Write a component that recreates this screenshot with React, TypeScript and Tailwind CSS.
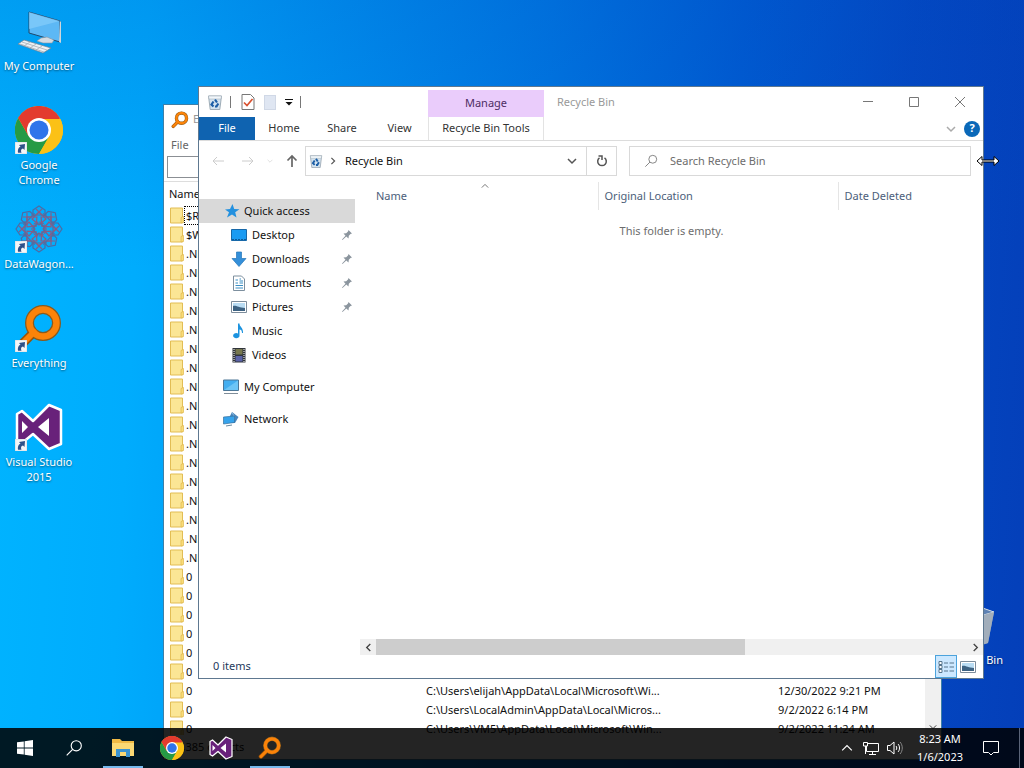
import { ReactNode } from "react";
import clsx from "clsx";

interface NavItem {
  name: string;
  icon: ReactNode;
  pinned?: boolean;
}

interface FileRow {
  name: string;
  path?: string;
  date?: string;
}

const ChromeIcon = ({ className }: { className?: string }) => (
  <svg viewBox="0 0 48 48" className={className}>
    <circle cx="24" cy="24" r="24" fill="#fbc116" />
    <path d="M24 24 3.2 12A24 24 0 0 1 44.8 12Z" fill="#e33b2e" />
    <path d="M3.2 12A24 24 0 0 0 24 48L34.4 30 24 24 13.6 30Z" fill="#269a45" />
    <path d="M3.2 12 13.6 30 24 13H44.8A24 24 0 0 0 3.2 12Z" fill="#e33b2e" />
    <path d="M24 13H45.3A24 24 0 0 1 24 48L34.4 30Z" fill="#fbc116" />
    <circle cx="24" cy="24" r="12" fill="#fff" />
    <circle cx="24" cy="24" r="9.5" fill="#2f74ea" />
  </svg>
);

const VisualStudioIcon = ({ className }: { className?: string }) => (
  <svg viewBox="0 0 48 48" className={className}>
    <path
      d="M2 11 7 8 18 18 34 2 46 7V41L34 46 18 31 7 40 2 37Z"
      fill="#68217a"
      stroke="#fff"
      strokeWidth="2.500"
      strokeLinejoin="round"
    />
    <path d="M34 15V33L23 24ZM7 18 13 24 7 30Z" fill="#fff" />
  </svg>
);

const EverythingIcon = ({ className }: { className?: string }) => (
  <svg viewBox="0 0 48 48" className={className}>
    <path d="M18 29 6 41" stroke="#9a5208" strokeWidth="9" strokeLinecap="round" />
    <circle cx="28" cy="19" r="13.500" fill="none" stroke="#8a5a1c" strokeWidth="9" />
    <path d="M19 28 6 41" stroke="#fb8309" strokeWidth="6" strokeLinecap="round" />
    <circle cx="28" cy="19" r="13.500" fill="none" stroke="#fb8309" strokeWidth="6.500" />
  </svg>
);

const ComputerIcon = ({ className }: { className?: string }) => (
  <svg viewBox="0 0 48 48" className={className}>
    <path d="M14 5 45 14V35L14 26Z" fill="#5db8f5" stroke="#20486c" />
    <path d="M14 5 45 14 14 22Z" fill="#86cdfb" opacity=".7" />
    <path d="M45 14 46 15V36L44 35" fill="#cfd6dc" />
    <path d="M26 31 32 30 39 33 37 36 28 36 22 34Z" fill="#d4dce4" stroke="#8696a5" strokeWidth=".6" />
    <path d="M9 33 36 41 28 46 3 37Z" fill="#eef1f4" stroke="#70808f" strokeWidth=".7" />
    <path d="M7 35 32 43M5 37 29 45M15 35 9 39M21 37 15 41M27 39 21 43" stroke="#a5afb8" strokeWidth=".8" />
  </svg>
);

const DataWagonIcon = ({ className }: { className?: string }) => (
  <svg viewBox="0 0 48 48" className={className} fill="none" strokeWidth="1.200">
    {[0, 45, 90, 135, 180, 225, 270, 315].map((angle) => (
      <g key={angle} transform={`rotate(${angle} 24 24)`}>
        <path d="M18 12V5L24 1 30 5V12" stroke="#4d6ba4" />
        <path d="M17 14 24 7 31 14 24 20Z" stroke="#8a5c84" />
        <path d="M16 10H32M20 19H28" stroke="#5a6c9c" />
        <path d="M21 4 27 10M27 4 21 10" stroke="#8a5c84" />
      </g>
    ))}
    <circle cx="24" cy="24" r="7" stroke="#8a5c84" strokeDasharray="2 1" />
  </svg>
);

const BinIcon = ({ className }: { className?: string }) => (
  <svg viewBox="0 0 16 16" className={className}>
    <path d="M1.500 2H14.500L12.800 15.500H3.200Z" fill="#d3e3ef" stroke="#8c9aa6" strokeWidth=".8" />
    <path d="M1.500 2H14.500L14 5H2Z" fill="#f1f6fa" stroke="#9ba7b1" strokeWidth=".5" />
    <path d="M8 5.500 10 8.500M11.300 9.500 9.500 12.500H8M6.500 12.500 4.500 10.500 6.500 7.500" fill="none" stroke="#1c5ea6" strokeWidth="2.200" />
  </svg>
);

const FullBinIcon = ({ className }: { className?: string }) => (
  <svg viewBox="0 0 48 48" className={className}>
    <path d="M5 10 24 4 44 11 38 42 26 46 10 42Z" fill="#8e9fb2" />
    <path d="M5 10 24 4 44 11 30 15Z" fill="#5e82b4" stroke="#d5dfe9" strokeWidth="1" />
    <path d="M30 15 44 11 38 42 28 45Z" fill="#a2aebb" />
  </svg>
);

const FolderIcon = () => (
  <svg viewBox="0 0 14 17" className="block h-[17px] w-[14px]">
    <path d="M.5 1H12.500V16H.5Z" fill="#fbe695" stroke="#e2bd55" />
    <path d="M11 10.500 13.500 9.500V15.500L11 16Z" fill="#f9dc77" stroke="#dfb750" strokeWidth=".7" />
  </svg>
);

const ShortcutArrow = () => (
  <svg viewBox="0 0 12 12" className="absolute bottom-0 left-0 size-3">
    <path d="M0 0H12V12H0Z" fill="#f4f6f8" stroke="#c3c9cf" strokeWidth=".6" />
    <path d="M3 10.800C2.500 7 4 5.300 5.500 4.800L4 3 10 2 9.500 8 8 6.500C6 7 5.500 8.500 6.500 10.800Z" fill="#2e5189" />
  </svg>
);

const PinIcon = () => (
  <svg viewBox="0 0 12 12" className="size-3">
    <path d="M7.500 1 11 4.500 9.500 5 7.800 6.800 7.500 9.500 5.300 7.500 1.500 11 1 10.500 4.500 6.700 2.500 4.500 5.200 4.200 7 2.500Z" fill="#8b959e" />
  </svg>
);

const PictureIcon = () => (
  <svg viewBox="0 0 16 16" className="size-4">
    <path d="M.5 2.500H15.500V13.500H.5Z" fill="#fff" stroke="#7c8c9b" />
    <path d="M2 4H14V12H2Z" fill="#b9dcf3" />
    <path d="M2 7C5 6 8 9 14 9V12H2Z" fill="#3d6282" />
  </svg>
);

const SearchIcon = ({ className }: { className?: string }) => (
  <svg viewBox="0 0 16 16" className={className} fill="none" stroke="currentColor">
    <circle cx="10" cy="6" r="4.500" />
    <path d="M6.800 9.200 1.500 14.500" />
  </svg>
);

const Chevron = ({ className }: { className?: string }) => (
  <svg viewBox="0 0 10 10" className={className} fill="none" stroke="currentColor">
    <path d="M1 3 5 7 9 3" />
  </svg>
);

const quickAccess: NavItem[] = [
  {
    name: "Desktop",
    pinned: true,
    icon: (
      <svg viewBox="0 0 16 16" className="size-4">
        <path d="M.5 2.500H15.500V13.500H.5Z" fill="#1a9bf2" stroke="#1768a8" />
        <path d="M1 12.500H15" stroke="#0d5b99" strokeDasharray="2 1" />
      </svg>
    ),
  },
  {
    name: "Downloads",
    pinned: true,
    icon: (
      <svg viewBox="0 0 16 16" className="size-4">
        <path d="M5.500 1H10.500V7.500H15L8 15.500 1 7.500H5.500Z" fill="#348fd9" stroke="#2476b9" strokeWidth=".7" />
      </svg>
    ),
  },
  {
    name: "Documents",
    pinned: true,
    icon: (
      <svg viewBox="0 0 16 16" className="size-4">
        <path d="M2.500 1H10.500L13.500 4V15.500H2.500Z" fill="#fff" stroke="#7d8f9e" />
        <path d="M4.500 5H7M8.500 4H10M8.500 6H12M4.500 8H7M8.500 8H12M4.500 10.500H12M4.500 13H12" stroke="#3a8fc4" />
      </svg>
    ),
  },
  { name: "Pictures", pinned: true, icon: <PictureIcon /> },
  {
    name: "Music",
    icon: (
      <svg viewBox="0 0 16 16" className="size-4">
        <path d="M7 .5H8.500C8.500 4 12.500 4.500 12 10H11C11 7.500 10 6.500 8.500 6.500V12.500A3.200 2.600 0 1 1 7 10.500Z" fill="#1c93df" />
      </svg>
    ),
  },
  {
    name: "Videos",
    icon: (
      <svg viewBox="0 0 16 16" className="size-4">
        <path d="M1.500 1H14.500V15.500H1.500Z" fill="#30343a" />
        <path d="M4.500 2H11.500V7.500H4.500Z" fill="#77784e" />
        <path d="M4.500 9H11.500V14.500H4.500Z" fill="#5b63a8" />
        <path d="M3 2V15M13 2V15" stroke="#fff" strokeDasharray="1 1" />
      </svg>
    ),
  },
];

const desktopIcons: { name: string; icon: ReactNode; shortcut: boolean }[] = [
  { name: "My Computer", icon: <ComputerIcon className="size-12" />, shortcut: false },
  { name: "Google Chrome", icon: <ChromeIcon className="size-12" />, shortcut: true },
  { name: "DataWagon...", icon: <DataWagonIcon className="size-12" />, shortcut: true },
  { name: "Everything", icon: <EverythingIcon className="size-12" />, shortcut: true },
  { name: "Visual Studio 2015", icon: <VisualStudioIcon className="size-12" />, shortcut: true },
];

const files: FileRow[] = [
  { name: "$Recycle.Bin" },
  { name: "$WinREAgent" },
  ...Array.from({ length: 17 }, () => ({ name: ".NET" })),
  ...Array.from({ length: 6 }, () => ({ name: "0" })),
  { name: "0", path: "C:\\Users\\elijah\\AppData\\Local\\Microsoft\\Wi...", date: "12/30/2022 9:21 PM" },
  { name: "0", path: "C:\\Users\\LocalAdmin\\AppData\\Local\\Micros...", date: "9/2/2022 6:14 PM" },
  { name: "0", path: "C:\\Users\\VM5\\AppData\\Local\\Microsoft\\Win...", date: "9/2/2022 11:24 AM" },
];

function DesktopIcon({ name, icon, shortcut }: { name: string; icon: ReactNode; shortcut: boolean }) {
  return (
    <button className="flex h-[99px] w-[78px] flex-col items-center gap-[3px] text-white">
      <span className="relative">
        {icon}
        {shortcut && <ShortcutArrow />}
      </span>
      <span className="leading-[15px] [text-shadow:0_1px_2px_rgba(0,0,0,0.5)]">{name}</span>
    </button>
  );
}

function EverythingWindow() {
  return (
    <section className="absolute top-[104px] right-[82px] bottom-2 left-[163px] flex flex-col overflow-hidden border border-[#3c7fa8] bg-white">
      <div className="flex h-[29px] shrink-0 items-center gap-1 pl-[7px] text-[#999]">
        <EverythingIcon className="size-[18px]" />
        <h2>Everything</h2>
      </div>
      <div className="flex h-[22px] shrink-0 items-center pl-[7px] text-[#666]">
        <button>File</button>
      </div>
      <input aria-label="Search files" className="mx-[3px] h-[22px] shrink-0 border border-[#8b8f94]" />
      <div className="mt-[3px] flex min-h-0 flex-1 border-t border-[#ddd]">
        <div className="min-w-0 flex-1 overflow-hidden">
          <table className="w-full table-fixed text-left">
            <thead>
              <tr className="h-6">
                <th className="w-[262px] pl-[5px] font-normal">Name</th>
                <th className="w-[352px] font-normal">Path</th>
                <th className="font-normal">Date Modified</th>
              </tr>
            </thead>
            <tbody>
              {files.map((file, i) => (
                <tr key={i} className="h-[19px]">
                  <td className="p-0 pl-[6px]">
                    <div className="flex items-center">
                      <FolderIcon />
                      <span
                        className={clsx(
                          "h-[19px] flex-1 border pl-px leading-[17px]",
                          i === 0 ? "border-dotted border-black" : "border-transparent"
                        )}
                      >
                        {file.name}
                      </span>
                    </div>
                  </td>
                  <td className="p-0 leading-[19px]">{file.path}</td>
                  <td className="p-0 leading-[19px]">{file.date}</td>
                </tr>
              ))}
            </tbody>
          </table>
        </div>
        <div className="flex w-4 shrink-0 flex-col justify-end bg-[#f0f0f0]">
          <button aria-label="Scroll down" className="flex h-4 items-center justify-center">
            <Chevron className="size-2" />
          </button>
        </div>
      </div>
      <div className="flex h-6 shrink-0 items-center pl-[6px]">51,385 objects</div>
    </section>
  );
}

function TitleBar() {
  return (
    <div className="flex h-[30px] shrink-0">
      <div className="flex w-[229px] items-center pl-2">
        <BinIcon className="size-4" />
        <span className="ml-[7px] h-3 w-px bg-[#777]" />
        <button aria-label="Properties" className="ml-[9px]">
          <svg viewBox="0 0 16 16" className="size-4">
            <path d="M2 .5H10.500L14 4V15.500H2Z" fill="#fff" stroke="#777" />
            <path d="M4 8.500 7 11.500 12.500 5" fill="none" stroke="#d8512f" strokeWidth="1.700" />
          </svg>
        </button>
        <button aria-label="New folder" className="ml-2 h-[15px] w-3 border border-[#d0d8e6] bg-[#dfe6f2]" />
        <button aria-label="Customize Quick Access Toolbar" className="ml-2">
          <svg viewBox="0 0 10 10" className="size-[10px]">
            <path d="M1 2.500H9" stroke="#111" />
            <path d="M1.500 5H8.500L5 8.500Z" fill="#111" />
          </svg>
        </button>
        <span className="ml-[6px] h-3 w-px bg-[#777]" />
      </div>
      <div className="mt-[3px] flex w-[116px] items-center justify-center bg-[#eaccfb] text-[#4d2c63]">Manage</div>
      <h1 className="ml-[13px] flex-1 leading-[30px] text-[#999]">Recycle Bin</h1>
      <div className="flex text-[#777]">
        <button aria-label="Minimize" className="flex w-[46px] items-center justify-center">
          <svg viewBox="0 0 10 10" className="size-[10px]" stroke="currentColor">
            <path d="M0 4.500H10" />
          </svg>
        </button>
        <button aria-label="Maximize" className="flex w-[46px] items-center justify-center">
          <svg viewBox="0 0 10 10" className="size-[10px]" fill="none" stroke="currentColor">
            <path d="M.5 .5H9.500V9.500H.5Z" />
          </svg>
        </button>
        <button aria-label="Close" className="flex w-[46px] items-center justify-center">
          <svg viewBox="0 0 10 10" className="size-[10px]" stroke="currentColor">
            <path d="M0 0 10 10M10 0 0 10" />
          </svg>
        </button>
      </div>
    </div>
  );
}

function RibbonTabs() {
  return (
    <div className="flex h-6 shrink-0 border-b border-[#dcdcdc] text-[#333]">
      <button className="w-14 bg-[#0f63b0] text-white">File</button>
      <button className="w-[58px]">Home</button>
      <button className="w-[58px]">Share</button>
      <button className="w-[57px]">View</button>
      <button className="w-[116px] border-x border-[#e3e3e3]">Recycle Bin Tools</button>
      <div className="flex flex-1 items-center justify-end gap-2 pr-[3px] text-[#aaa]">
        <button aria-label="Expand ribbon">
          <Chevron className="size-[10px] stroke-[1.500px]" />
        </button>
        <button
          aria-label="Help"
          className="flex size-4 items-center justify-center rounded-full bg-[#0a68b8] font-bold text-white"
        >
          ?
        </button>
      </div>
    </div>
  );
}

function AddressBar() {
  return (
    <div className="flex h-[41px] shrink-0 items-start pt-[5px] pr-3">
      <div className="flex h-[30px] w-[106px] items-center pl-3 text-[#ccc]">
        <button aria-label="Back">
          <svg viewBox="0 0 14 14" className="size-[14px]" fill="none" stroke="currentColor">
            <path d="M13 7H2M6 3 2 7 6 11" />
          </svg>
        </button>
        <button aria-label="Forward" className="ml-4">
          <svg viewBox="0 0 14 14" className="size-[14px]" fill="none" stroke="currentColor">
            <path d="M1 7H12M8 3 12 7 8 11" />
          </svg>
        </button>
        <button aria-label="Recent locations" className="ml-3">
          <Chevron className="size-[6px]" />
        </button>
        <button aria-label="Up" className="ml-3 text-[#666]">
          <svg viewBox="0 0 14 14" className="size-[14px]" fill="none" stroke="currentColor" strokeWidth="1.700">
            <path d="M7 13V2M2.500 6.500 7 2 11.500 6.500" />
          </svg>
        </button>
      </div>
      <div className="flex h-[30px] flex-[310] items-center border border-[#d9d9d9]">
        <BinIcon className="ml-[3px] size-[14px]" />
        <Chevron className="ml-[6px] size-2 -rotate-90 stroke-[1.500px] text-[#555]" />
        <span className="ml-2 flex-1">Recycle Bin</span>
        <button aria-label="Previous locations" className="mr-[9px] text-[#555]">
          <Chevron className="size-[10px] stroke-[1.500px]" />
        </button>
        <button aria-label="Refresh" className="flex h-full w-[30px] items-center justify-center border-l border-[#d9d9d9] text-[#555]">
          <svg viewBox="0 0 12 12" className="size-3" fill="none" stroke="currentColor" strokeWidth="1.500">
            <path d="M8.500 2.800A4.300 4.300 0 1 1 3.500 2.800M2.500 1H6V5" />
          </svg>
        </button>
      </div>
      <label className="ml-3 flex h-[30px] flex-[326] items-center border border-[#d9d9d9] pl-[14px] text-[#777]">
        <SearchIcon className="size-[14px]" />
        <input
          aria-label="Search Recycle Bin"
          placeholder="Search Recycle Bin"
          className="ml-3 min-w-0 flex-1 outline-none placeholder:text-[#6d6d6d]"
        />
      </label>
    </div>
  );
}

function NavPane() {
  return (
    <nav className="w-[161px] shrink-0 pt-[17px]">
      <a href="#quick" className="flex h-6 w-[156px] items-center gap-1 bg-[#d9d9d9] pl-[25px]">
        <svg viewBox="0 0 16 16" className="size-4">
          <path d="M8.500 1 10.200 6 15.500 6.200 11.200 9.200 12.500 14.500 8 11.500 3 14.500 5 9.200 1 6.500 6 6Z" fill="#2491df" />
        </svg>
        Quick access
      </a>
      {quickAccess.map((item) => (
        <a key={item.name} href={`#${item.name}`} className="flex h-6 w-[156px] items-center gap-[5px] pr-[2px] pl-8">
          {item.icon}
          <span className="flex-1">{item.name}</span>
          {item.pinned && <PinIcon />}
        </a>
      ))}
      <a href="#computer" className="mt-2 flex h-6 items-center gap-[5px] pl-6">
        <svg viewBox="0 0 16 16" className="size-4">
          <path d="M.5 1H15.500V11.500H.5Z" fill="#44aef0" stroke="#4c7797" />
          <path d="M1 11 15 1.500V11Z" fill="#6dc5f6" />
          <path d="M1 14.500H15" stroke="#7f8d99" />
        </svg>
        My Computer
      </a>
      <a href="#network" className="mt-2 flex h-6 items-center gap-[5px] pl-6">
        <svg viewBox="0 0 16 16" className="size-4">
          <path d="M9 1 15.500 6 12 12H7V5Z" fill="#4a86bc" />
          <path d="M9 2C12 5 12 9 9 11" stroke="#8dbbe0" fill="none" />
          <path d="M.5 6 11.500 5V11.500L.5 13Z" fill="#36a3ec" stroke="#38719d" strokeWidth=".7" />
          <path d="M3 15 9 14" stroke="#65879f" />
        </svg>
        Network
      </a>
    </nav>
  );
}

function RecycleBinWindow() {
  return (
    <section className="absolute top-[86px] right-10 bottom-[89px] left-[198px] flex flex-col border border-[#5e7890] bg-white">
      <TitleBar />
      <RibbonTabs />
      <AddressBar />
      <div className="flex min-h-0 flex-1">
        <NavPane />
        <div className="flex min-w-0 flex-1 flex-col">
          <div className="pl-3">
            <table className="w-full table-fixed text-left text-[#4c607a]">
              <thead>
                <tr className="h-7">
                  <th className="relative w-[226px] border-r border-[#e5e5e5] pl-1 font-normal">
                    <Chevron className="absolute top-0 left-1/2 size-2 -translate-x-1/2 rotate-180 text-[#555]" />
                    Name
                  </th>
                  <th className="w-[240px] border-r border-[#e5e5e5] pl-[6px] font-normal">Original Location</th>
                  <th className="pl-[6px] font-normal">Date Deleted</th>
                </tr>
              </thead>
            </table>
          </div>
          <p className="mt-[13px] flex-1 text-center text-[#6d6d6d]">This folder is empty.</p>
          <div className="flex h-4 shrink-0 bg-[#f0f0f0] text-[#444]">
            <button aria-label="Scroll left" className="flex w-4 items-center justify-center">
              <Chevron className="size-[9px] rotate-90 stroke-[1.500px]" />
            </button>
            <div className="flex-1">
              <div className="h-full w-5/8 bg-[#cdcdcd]" />
            </div>
            <button aria-label="Scroll right" className="flex w-4 items-center justify-center">
              <Chevron className="size-[9px] -rotate-90 stroke-[1.500px]" />
            </button>
          </div>
        </div>
      </div>
      <div className="flex h-[23px] shrink-0 items-center pr-1 pl-[14px] text-[#1e395b]">
        <span className="flex-1">0 items</span>
        <button aria-label="Details" className="flex h-full w-[22px] items-center justify-center border border-[#4ca3dc] bg-[#cce8ff]">
          <svg viewBox="0 0 16 14" className="h-[14px] w-4" fill="none" stroke="#57758c">
            <path d="M1 1.500H4V4.500H1ZM1 5.500H4V8.500H1ZM1 9.500H4V12.500H1Z" fill="#fff" />
            <path d="M6 3H10M11.500 3H16M6 7H10M11.500 7H16M6 11H10M11.500 11H16" />
          </svg>
        </button>
        <button aria-label="Large icons" className="flex w-[22px] justify-center">
          <PictureIcon />
        </button>
      </div>
    </section>
  );
}

function Taskbar() {
  const apps = [
    {
      name: "Start",
      active: false,
      icon: (
        <svg viewBox="0 0 16 16" className="size-4" fill="#fff">
          <path d="M0 2.300 6.800 1.400V7.600H0ZM7.600 1.200 16 0V7.600H7.600ZM0 8.400H6.800V14.600L0 13.700ZM7.600 8.400H16V16L7.600 14.800Z" />
        </svg>
      ),
    },
    { name: "Search", active: false, icon: <SearchIcon className="size-[18px]" /> },
    {
      name: "File Explorer",
      active: true,
      icon: (
        <svg viewBox="0 0 22 18" className="h-[18px] w-[22px]">
          <path d="M0 0H8L10 2H22V17H0Z" fill="#f0ba45" />
          <path d="M0 4H22V17H0Z" fill="#fbd974" />
          <path d="M4 18V10H18V18H14V13H8V18Z" fill="#3b94d1" />
        </svg>
      ),
    },
    { name: "Google Chrome", active: false, icon: <ChromeIcon className="size-6" /> },
    { name: "Visual Studio", active: false, icon: <VisualStudioIcon className="size-6" /> },
    { name: "Everything", active: true, icon: <EverythingIcon className="size-6" /> },
  ];

  return (
    <footer className="absolute inset-x-0 bottom-0 flex h-10 justify-between bg-black/86 text-white">
      <div className="flex gap-px pl-px">
        {apps.map((app) => (
          <button key={app.name} aria-label={app.name} className="relative flex w-12 items-center justify-center">
            {app.icon}
            {app.active && <span className="absolute inset-x-1 bottom-0 h-[2px] bg-[#76b9ed]" />}
          </button>
        ))}
      </div>
      <div className="flex items-center">
        <button aria-label="Show hidden icons">
          <Chevron className="size-3 rotate-180" />
        </button>
        <svg viewBox="0 0 16 16" className="ml-[10px] size-4" fill="none" stroke="currentColor">
          <path d="M5 3.500H15.500V11.500H3.500V6M.5 2.500H4.500V6H.5ZM9.500 11.500V14.500M6 14.500H13M2.500 6V14" />
        </svg>
        <svg viewBox="0 0 16 16" className="ml-2 size-4" fill="none" stroke="currentColor">
          <path d="M.5 5.500H3L7 2V14L3 10.500H.5ZM9 6C10 7 10 9 9 10M11 4C13 6 13 10 11 12" />
          <path d="M13 2C16 5 16 11 13 14" stroke="#888" />
        </svg>
        <time className="ml-3 w-[50px] text-center leading-[18px]">
          8:23 AM
          <br />
          1/6/2023
        </time>
        <button aria-label="Notifications" className="ml-[18px]">
          <svg viewBox="0 0 16 16" className="size-4" fill="none" stroke="currentColor">
            <path d="M.5 1.500H15.500V12.500H10.500L8 15 5.500 12.500H.5Z" />
          </svg>
        </button>
        <span className="mr-1 ml-5 h-10 w-px bg-[#5a6478]" />
      </div>
    </footer>
  );
}

export default function App() {
  return (
    <main className="relative h-screen overflow-hidden bg-[linear-gradient(180deg,rgba(0,70,190,0.2)_0%,rgba(0,70,190,0)_35%),linear-gradient(93deg,#00b4ff_0%,#00acfd_14%,#0096f2_30%,#0078e2_52%,#005cd2_70%,#0348c2_86%,#043fb9_100%)] font-['Noto_Sans','Open_Sans',sans-serif] text-[11px] text-[#111]">
      <div className="flex flex-col pt-[7px]">
        {desktopIcons.map((item) => (
          <DesktopIcon key={item.name} {...item} />
        ))}
      </div>
      <div className="absolute right-[11px] bottom-[68px]">
        <DesktopIcon name="Recycle Bin" icon={<FullBinIcon className="size-12" />} shortcut={false} />
      </div>
      <EverythingWindow />
      <RecycleBinWindow />
      <Taskbar />
      {/* resize cursor on the window edge */}
      <svg viewBox="0 0 24 12" className="absolute top-[155px] left-[976px] h-3 w-6">
        <path d="M1 6 6 1.500V5H18V1.500L23 6 18 10.500V7H6V10.500Z" fill="#fff" stroke="#000" strokeWidth="1" />
      </svg>
    </main>
  );
}
